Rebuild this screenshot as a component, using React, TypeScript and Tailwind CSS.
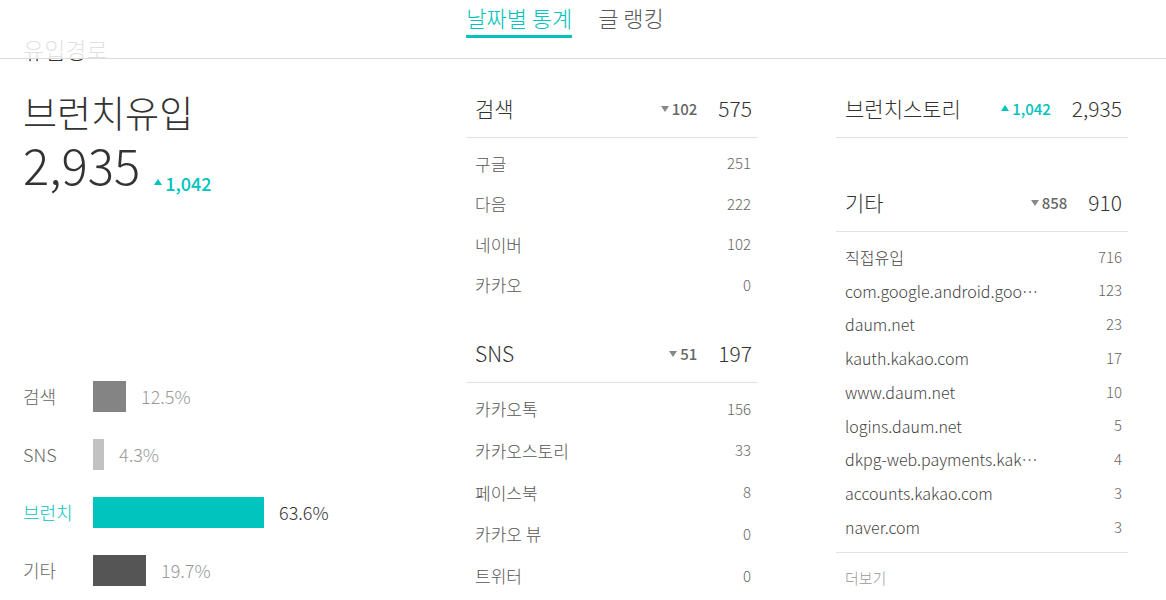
import React from "react";

const teal = "text-[#00c3bd]";

const Up = ({ className = "" }: { className?: string }) => (
  <svg width="8" height="6" viewBox="0 0 8 6" className={className}>
    <path d="M4 0 L8 6 L0 6 Z" fill="currentColor" />
  </svg>
);

const Down = ({ className = "" }: { className?: string }) => (
  <svg width="8" height="6" viewBox="0 0 8 6" className={className}>
    <path d="M0 0 L8 0 L4 6 Z" fill="currentColor" />
  </svg>
);

const bars = [
  { label: "검색", pct: "12.5%", w: 33, bar: "bg-[#848484]", labelCls: "text-[#666]", pctCls: "text-[#999]" },
  { label: "SNS", pct: "4.3%", w: 11, bar: "bg-[#c2c2c2]", labelCls: "text-[#666]", pctCls: "text-[#999]" },
  { label: "브런치", pct: "63.6%", w: 171, bar: "bg-[#00c4bd]", labelCls: "text-[#00c3bd]", pctCls: "text-[#333]" },
  { label: "기타", pct: "19.7%", w: 53, bar: "bg-[#555]", labelCls: "text-[#666]", pctCls: "text-[#999]" },
];

const search = [
  ["구글", "251"],
  ["다음", "222"],
  ["네이버", "102"],
  ["카카오", "0"],
];

const sns = [
  ["카카오톡", "156"],
  ["카카오스토리", "33"],
  ["페이스북", "8"],
  ["카카오 뷰", "0"],
  ["트위터", "0"],
];

const etc = [
  ["직접유입", "716"],
  ["com.google.android.googlequicksearchbox", "123"],
  ["daum.net", "23"],
  ["kauth.kakao.com", "17"],
  ["www.daum.net", "10"],
  ["logins.daum.net", "5"],
  ["dkpg-web.payments.kakao.com", "4"],
  ["accounts.kakao.com", "3"],
  ["naver.com", "3"],
];

const GroupHeader = ({
  title,
  diff,
  up,
  total,
}: {
  title: string;
  diff: string;
  up?: boolean;
  total: string;
}) => (
  <div className="flex h-[57px] items-center border-b border-[#e2e2e2] pl-[9px] pr-[6px]">
    <span className="flex-1 text-[21px] font-light text-[#333]">{title}</span>
    <span
      className={`flex items-center gap-[3px] text-[15px] font-medium ${
        up ? teal : "text-[#666]"
      }`}
    >
      {up ? <Up className="mb-[3px]" /> : <Down className="mb-[1px] text-[#888]" />}
      {diff}
    </span>
    <span className="ml-[21px] text-[21px] font-light text-[#333]">{total}</span>
  </div>
);

export default function App() {
  return (
    <div className="relative h-[600px] w-[1166px] overflow-hidden bg-white font-['Noto_Sans_CJK_KR','Noto_Sans',sans-serif]">
      <div className="flex pt-[34px] pr-[38px]">
        {/* left column */}
        <div className="flex flex-1 flex-col pl-[23px]">
          <div className="text-[23px] leading-[30px] font-light text-[#333]">유입경로</div>
          <div className="mt-[26px] text-[37px] leading-[44px] font-light text-[#333]">브런치유입</div>
          <div className="flex items-baseline">
            <span className="text-[49px] leading-[60px] font-light text-[#333]">2,935</span>
            <span className={`ml-[14px] flex items-center gap-[3px] text-[18px] font-medium ${teal}`}>
              <Up className="mb-[3px]" />
              1,042
            </span>
          </div>
          <div className="mt-[170px] flex flex-col">
            {bars.map((b) => (
              <div key={b.label} className="flex h-[58px] items-center">
                <span className={`w-[70px] text-[18px] font-light ${b.labelCls}`}>{b.label}</span>
                <div className={`h-[31px] ${b.bar}`} style={{ width: b.w }} />
                <span className={`ml-[15px] text-[18px] font-light ${b.pctCls}`}>{b.pct}</span>
              </div>
            ))}
          </div>
        </div>

        {/* search / sns */}
        <div className="mt-[47px] flex w-[292px] flex-col">
          <GroupHeader title="검색" diff="102" total="575" />
          <div className="flex flex-col pt-[5px]">
            {search.map(([k, v]) => (
              <div key={k} className="flex h-[40.5px] items-center pl-[9px] pr-[7px]">
                <span className="flex-1 text-[17px] font-light text-[#555]">{k}</span>
                <span className="text-[15px] font-light text-[#666]">{v}</span>
              </div>
            ))}
          </div>
          <div className="mt-[21px]">
            <GroupHeader title="SNS" diff="51" total="197" />
          </div>
          <div className="flex flex-col pt-[5px]">
            {sns.map(([k, v]) => (
              <div key={k} className="flex h-[41.75px] items-center pl-[9px] pr-[7px]">
                <span className="flex-1 text-[17px] font-light text-[#555]">{k}</span>
                <span className="text-[15px] font-light text-[#666]">{v}</span>
              </div>
            ))}
          </div>
        </div>

        {/* brunch / etc */}
        <div className="mt-[47px] ml-[78px] flex w-[292px] flex-col">
          <GroupHeader title="브런치스토리" diff="1,042" up total="2,935" />
          <div className="mt-[37px]">
            <GroupHeader title="기타" diff="858" total="910" />
          </div>
          <div className="flex flex-col border-b border-[#e2e2e2] pt-[8px] pb-[8px]">
            {etc.map(([k, v]) => (
              <div key={k} className="flex h-[33.75px] items-center pl-[9px] pr-[6px]">
                <span className="max-w-[200px] truncate text-[16px] font-light text-[#444]">{k}</span>
                <span className="ml-auto text-[15px] font-light text-[#666]">{v}</span>
              </div>
            ))}
          </div>
          <div className="mt-[15px] pl-[9px] text-[15px] leading-[20px] font-light text-[#999]">더보기</div>
        </div>
      </div>

      {/* sticky tab bar over scrolled content */}
      <div className="absolute inset-x-0 top-0 flex h-[59px] justify-center gap-[26px] border-b border-[#dcdcdc] bg-white/85 pr-[36px]">
        <div className="flex h-[38px] flex-col items-center justify-end border-b-[3px] border-[#00c3bd]">
          <span className={`pb-[4px] text-[22px] leading-[28px] font-light ${teal}`}>날짜별 통계</span>
        </div>
        <div className="flex h-[38px] items-end">
          <span className="pb-[7px] text-[22px] leading-[28px] font-light text-[#555]">글 랭킹</span>
        </div>
      </div>
    </div>
  );
}
